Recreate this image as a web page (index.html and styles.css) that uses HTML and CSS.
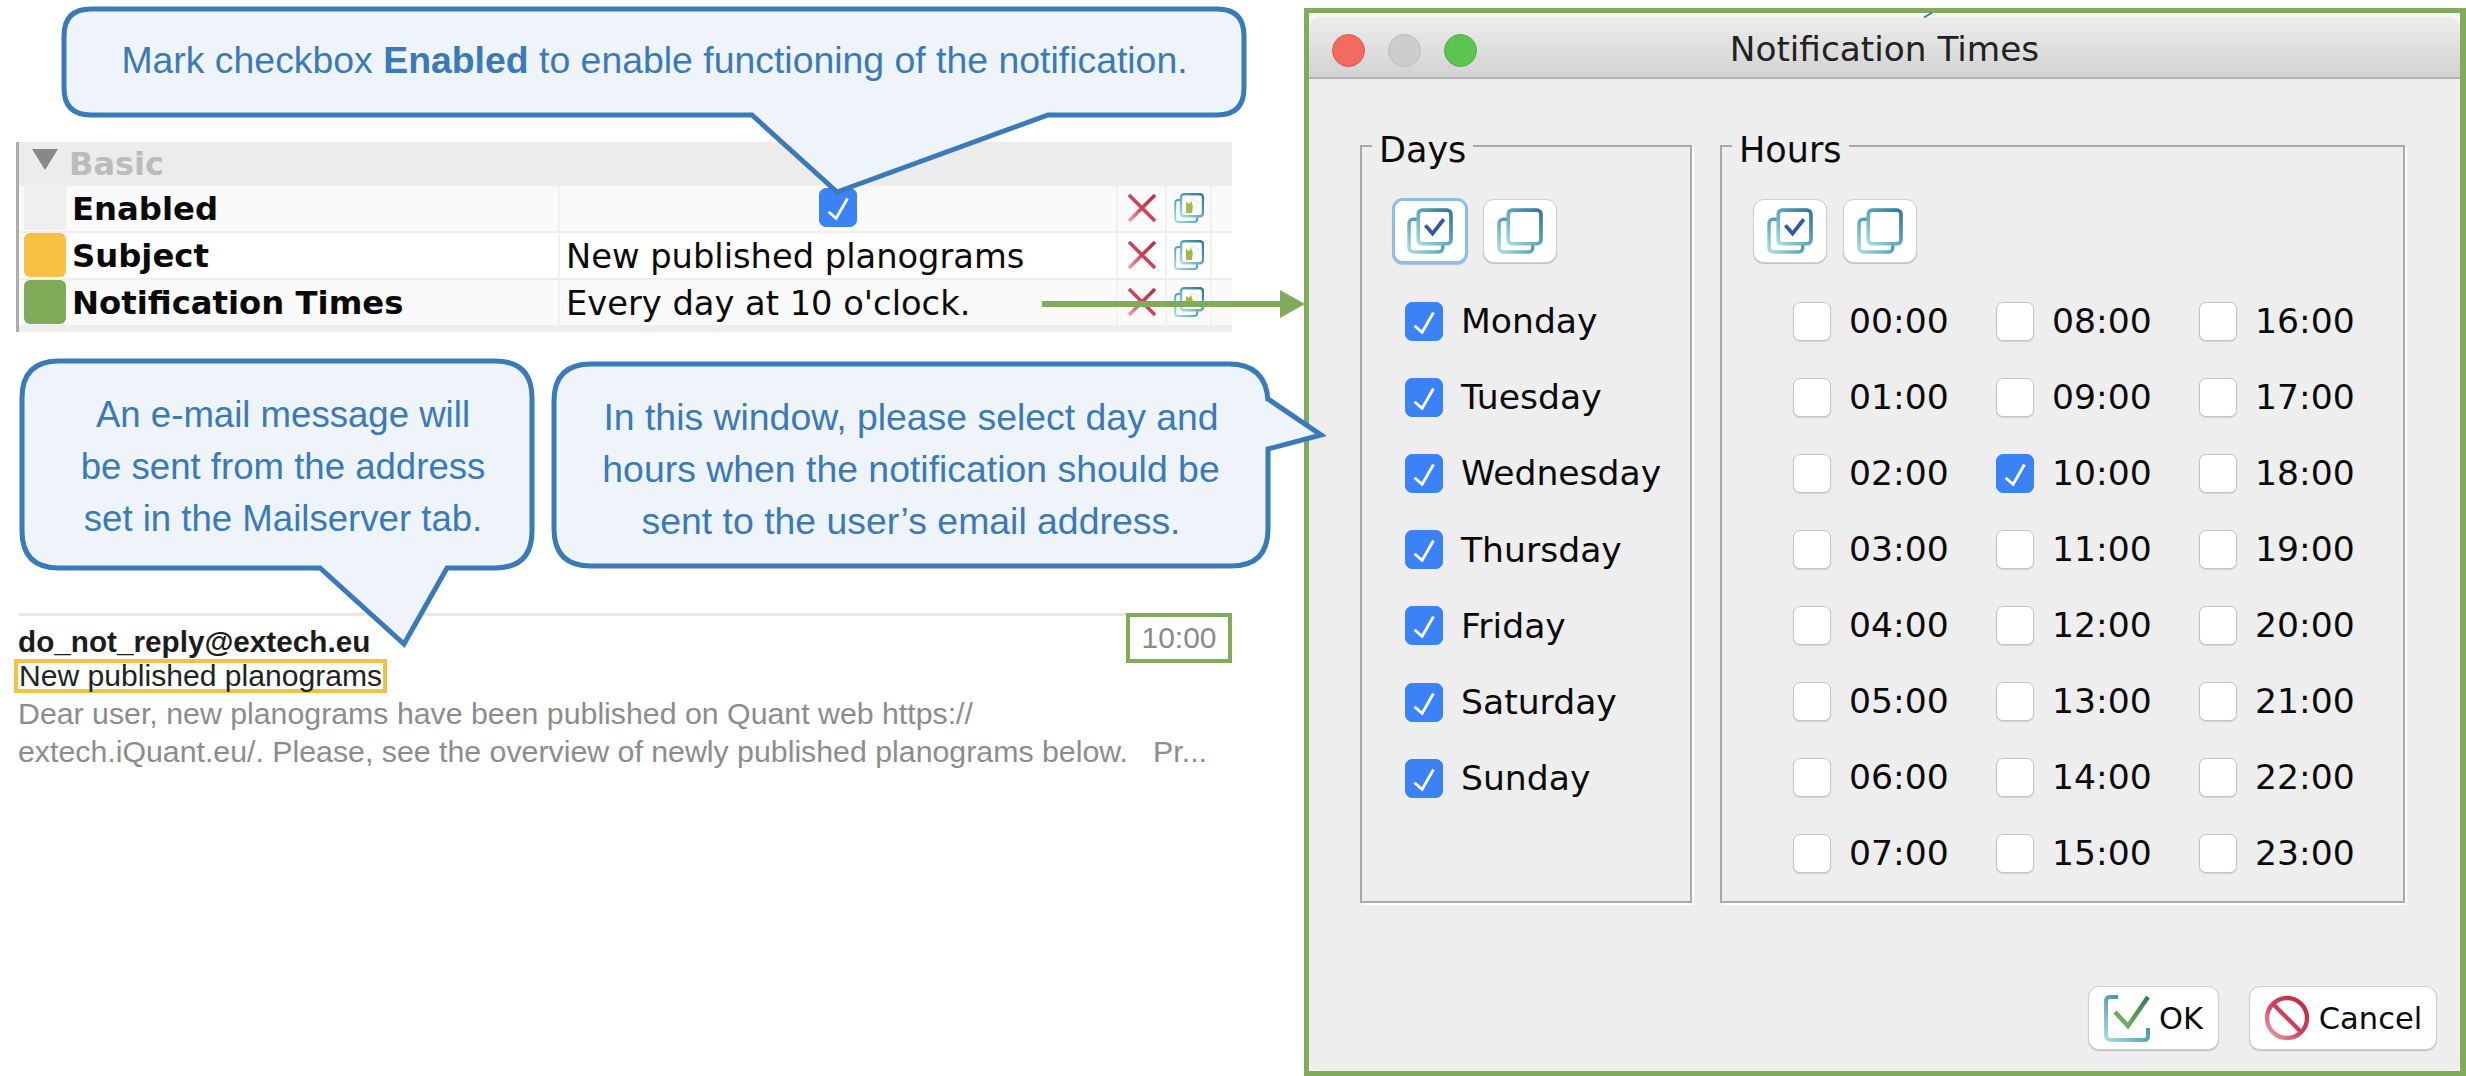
FILE: index.html
```html
<!DOCTYPE html>
<html lang="en">
<head>
<meta charset="utf-8">
<title>Notification Times</title>
<link rel="stylesheet" href="styles.css">
</head>
<body>
<svg class="defs" aria-hidden="true">
  <defs>
    <linearGradient id="teal" x1="0" y1="1" x2="1" y2="0">
      <stop offset="0" stop-color="#a8dbe3"/><stop offset="0.5" stop-color="#5aa6ba"/><stop offset="1" stop-color="#2f7695"/>
    </linearGradient>
    <linearGradient id="red" x1="0" y1="1" x2="1" y2="0">
      <stop offset="0" stop-color="#efa0b0"/><stop offset="0.5" stop-color="#cf4058"/><stop offset="1" stop-color="#bb2f3f"/>
    </linearGradient>
    <linearGradient id="green" x1="0" y1="1" x2="1" y2="0">
      <stop offset="0" stop-color="#7fb864"/><stop offset="1" stop-color="#2f7a50"/>
    </linearGradient>
    <symbol id="stack" viewBox="0 0 45 45">
      <rect x="2" y="11" width="33" height="32" rx="4" fill="none" stroke="url(#teal)" stroke-width="3.4"/>
      <rect x="11" y="2" width="32" height="33" rx="4" fill="#fff" stroke="url(#teal)" stroke-width="3.6"/>
    </symbol>
    <symbol id="stack-check" viewBox="0 0 45 45">
      <rect x="2" y="11" width="33" height="32" rx="4" fill="none" stroke="url(#teal)" stroke-width="3.4"/>
      <rect x="11" y="2" width="32" height="33" rx="4" fill="#fff" stroke="url(#teal)" stroke-width="3.6"/>
      <path d="M18 17l7 8 11-14" fill="none" stroke="#2b5aa6" stroke-width="3.6"/>
    </symbol>
    <symbol id="stack-pin" viewBox="0 0 30 30">
      <rect x="1.2" y="7" width="22" height="22" rx="3" fill="none" stroke="url(#teal)" stroke-width="2"/>
      <rect x="7" y="1.2" width="22" height="22" rx="3" fill="#fff" stroke="url(#teal)" stroke-width="2.4"/>
      <path d="M12 9l3 2 2-3 2 4-1 8h-6z" fill="#a9b83a"/>
      <path d="M17 6l8 3-6 5z" fill="#fff" stroke="#cfd8d8" stroke-width="0.6"/>
    </symbol>
    <symbol id="cross" viewBox="0 0 30 30">
      <path d="M2 2l26 26M28 2L2 28" fill="none" stroke="url(#red)" stroke-width="3.6"/>
    </symbol>
    <symbol id="tick" viewBox="0 0 38 39">
      <path d="M9 24l8 7L29 10" fill="none" stroke="#fff" stroke-width="3"/>
    </symbol>
  </defs>
</svg>

<main class="screen">
  <section class="left">
    <div class="props">
      <div class="group"><span class="tri"></span>Basic</div>
      <div class="row row-alt">
        <span class="swatch swatch-none"></span>
        <span class="name">Enabled</span>
        <span class="val val-center"><span class="cb cb-on"><svg class="tick"><use href="#tick"/></svg></span></span>
        <span class="act"><svg class="ico"><use href="#cross"/></svg></span>
        <span class="act"><svg class="ico"><use href="#stack-pin"/></svg></span>
        <span class="end"></span>
      </div>
      <div class="row">
        <span class="swatch swatch-yellow"></span>
        <span class="name">Subject</span>
        <span class="val">New published planograms</span>
        <span class="act"><svg class="ico"><use href="#cross"/></svg></span>
        <span class="act"><svg class="ico"><use href="#stack-pin"/></svg></span>
        <span class="end"></span>
      </div>
      <div class="row row-alt">
        <span class="swatch swatch-green"></span>
        <span class="name">Notification Times</span>
        <span class="val">Every day at 10 o'clock.</span>
        <span class="act"><svg class="ico"><use href="#cross"/></svg></span>
        <span class="act"><svg class="ico"><use href="#stack-pin"/></svg></span>
        <span class="end"></span>
      </div>
    </div>

    <article class="mail">
      <div class="mail-head">
        <span class="sender">do_not_reply@extech.eu</span>
        <span class="time">10:00</span>
      </div>
      <div class="subject">New published planograms</div>
      <p class="body">Dear user, new planograms have been published on Quant web https://<br>extech.iQuant.eu/. Please, see the overview of newly published planograms below. &nbsp; Pr...</p>
    </article>
  </section>

  <section class="frame">
    <div class="dialog">
      <header class="titlebar">
        <span class="lights"><i class="light l-red"></i><i class="light l-gray"></i><i class="light l-green"></i></span>
        <span class="title">Notification Times</span>
      </header>
      <div class="panels">
        <fieldset class="panel panel-days">
          <legend>Days</legend>
          <div class="tools">
            <button class="tool tool-focus"><svg class="tool-ico"><use href="#stack-check"/></svg></button>
            <button class="tool"><svg class="tool-ico"><use href="#stack"/></svg></button>
          </div>
          <ul class="days">
            <li class="opt"><span class="cb cb-on"><svg class="tick"><use href="#tick"/></svg></span>Monday</li>
            <li class="opt"><span class="cb cb-on"><svg class="tick"><use href="#tick"/></svg></span>Tuesday</li>
            <li class="opt"><span class="cb cb-on"><svg class="tick"><use href="#tick"/></svg></span>Wednesday</li>
            <li class="opt"><span class="cb cb-on"><svg class="tick"><use href="#tick"/></svg></span>Thursday</li>
            <li class="opt"><span class="cb cb-on"><svg class="tick"><use href="#tick"/></svg></span>Friday</li>
            <li class="opt"><span class="cb cb-on"><svg class="tick"><use href="#tick"/></svg></span>Saturday</li>
            <li class="opt"><span class="cb cb-on"><svg class="tick"><use href="#tick"/></svg></span>Sunday</li>
          </ul>
        </fieldset>
        <fieldset class="panel panel-hours">
          <legend>Hours</legend>
          <div class="tools tools-hours">
            <button class="tool"><svg class="tool-ico"><use href="#stack-check"/></svg></button>
            <button class="tool"><svg class="tool-ico"><use href="#stack"/></svg></button>
          </div>
          <ul class="hours">
            <li class="opt"><span class="cb"></span>00:00</li>
            <li class="opt"><span class="cb"></span>01:00</li>
            <li class="opt"><span class="cb"></span>02:00</li>
            <li class="opt"><span class="cb"></span>03:00</li>
            <li class="opt"><span class="cb"></span>04:00</li>
            <li class="opt"><span class="cb"></span>05:00</li>
            <li class="opt"><span class="cb"></span>06:00</li>
            <li class="opt"><span class="cb"></span>07:00</li>
            <li class="opt"><span class="cb"></span>08:00</li>
            <li class="opt"><span class="cb"></span>09:00</li>
            <li class="opt"><span class="cb cb-on"><svg class="tick"><use href="#tick"/></svg></span>10:00</li>
            <li class="opt"><span class="cb"></span>11:00</li>
            <li class="opt"><span class="cb"></span>12:00</li>
            <li class="opt"><span class="cb"></span>13:00</li>
            <li class="opt"><span class="cb"></span>14:00</li>
            <li class="opt"><span class="cb"></span>15:00</li>
            <li class="opt"><span class="cb"></span>16:00</li>
            <li class="opt"><span class="cb"></span>17:00</li>
            <li class="opt"><span class="cb"></span>18:00</li>
            <li class="opt"><span class="cb"></span>19:00</li>
            <li class="opt"><span class="cb"></span>20:00</li>
            <li class="opt"><span class="cb"></span>21:00</li>
            <li class="opt"><span class="cb"></span>22:00</li>
            <li class="opt"><span class="cb"></span>23:00</li>
          </ul>
        </fieldset>
      </div>
      <footer class="actions">
        <button class="btn btn-ok">
          <svg class="btn-ico" viewBox="0 0 46 48"><path d="M14 3H6Q2 3 2 7V41Q2 46 7 46H40Q44 46 44 42V34" fill="none" stroke="url(#teal)" stroke-width="4"/><path d="M11 18l13 14L44 3" fill="none" stroke="url(#green)" stroke-width="4.4"/></svg>OK
        </button>
        <button class="btn btn-cancel">
          <svg class="btn-ico" viewBox="0 0 46 48"><circle cx="23" cy="24" r="20" fill="none" stroke="url(#red)" stroke-width="4.4"/><path d="M9 10l28 28" stroke="url(#red)" stroke-width="4.4"/></svg>Cancel
        </button>
      </footer>
    </div>
  </section>

  <div class="callout callout-top">
    <svg class="shape" viewBox="0 0 1196 200"><path d="M30 3H1156Q1183 3 1183 30V82Q1183 109 1156 109H987L776 186 691 109H30Q3 109 3 82V30Q3 3 30 3Z"/></svg>
    <p class="say say-top">Mark checkbox <b>Enabled</b> to enable functioning of the notification.</p>
  </div>
  <div class="callout callout-mail">
    <svg class="shape" viewBox="0 0 520 294"><path d="M40 3H476Q513 3 513 40V173Q513 210 476 210H428L385 286 301 210H40Q3 210 3 173V40Q3 3 40 3Z"/></svg>
    <p class="say say-mail">An e-mail message will<br>be sent from the address<br>set in the Mailserver tab.</p>
  </div>
  <div class="callout callout-window">
    <svg class="shape" viewBox="0 0 775 210"><path d="M40 3H678Q715 3 717 40V38L770 74 717 88V168Q717 205 680 205H40Q3 205 3 168V40Q3 3 40 3Z"/></svg>
    <p class="say say-window">In this window, please select day and<br>hours when the notification should be<br>sent to the user’s email address.</p>
  </div>
  <svg class="arrow" viewBox="0 0 264 30"><path d="M0 12H238V1L263 15 238 29V18H0Z"/></svg>
  <svg class="stray" viewBox="0 0 10 6"><path d="M1 5.5L9 .8"/></svg>
</main>
</body>
</html>
```

FILE: styles.css
```css
* { box-sizing: border-box; }
html, body { margin: 0; padding: 0; background: #fff; }
.defs { position: absolute; width: 0; height: 0; }

.screen {
  position: relative;
  display: flex;
  width: 2466px;
  height: 1076px;
  overflow: hidden;
  font-family: "DejaVu Sans", sans-serif;
  color: #0a0a0a;
}

/* left column */
.left { width: 1304px; flex: none; padding: 142px 0 0 16px; }

.props {
  width: 1216px;
  height: 190px;
  border-left: 3px solid #adadad;
  background: #eeeeee;
  display: flex;
  flex-direction: column;
  gap: 2px;
}
.group {
  height: 42px;
  display: flex;
  align-items: center;
  padding: 2px 0 0 13px;
  gap: 11px;
  font-size: 32px;
  font-weight: 700;
  color: #bcbcbc;
  background: #ececec;
}
.tri {
  width: 0;
  height: 0;
  margin-bottom: 10px;
  border-left: 13px solid transparent;
  border-right: 13px solid transparent;
  border-top: 21px solid #888;
}
.row {
  height: 45px;
  display: grid;
  grid-template-columns: 47px 494px 558px 49px 45px 1fr;
  align-items: stretch;
  background: #fff;
}
.row-alt { background: #fafafa; }
.swatch { display: block; margin: 0 0 3px 5px; border-radius: 6px; }
.swatch-none { background: #efefef; border-radius: 0; margin-left: 5px; }
.swatch-yellow { background: #f6c142; }
.swatch-green { background: #81ab58; }
.name {
  padding-left: 6px;
  font-size: 32.3px;
  font-weight: 700;
  line-height: 47px;
  white-space: nowrap;
  border-right: 2px solid #f1f1f1;
}
.val {
  padding-left: 6px;
  font-size: 33.7px;
  line-height: 47px;
  white-space: nowrap;
  border-right: 2px solid #f1f1f1;
}
.val-center { display: flex; justify-content: center; padding: 2px 0 0; }
.act {
  display: flex;
  align-items: center;
  justify-content: center;
  border-right: 2px solid #f1f1f1;
  padding-bottom: 4px;
}
.ico { width: 30px; height: 30px; }

.cb {
  flex: none;
  display: inline-block;
  width: 38px;
  height: 39px;
  border-radius: 7px;
  background: #fff;
  border: 1px solid #c4c4c4;
  box-shadow: 0 1px 1px rgba(0,0,0,.12);
}
.cb-on { background: #3b82f6; border-color: #3b82f6; box-shadow: none; }
.tick { display: block; width: 36px; height: 37px; }

/* mail preview */
.mail {
  width: 1214px;
  margin: 281px 0 0 2px;
  border-top: 3px solid #e8e8e8;
  font-family: "Liberation Sans", sans-serif;
}
.mail-head { display: flex; justify-content: space-between; align-items: flex-start; height: 43px; }
.sender { font-size: 29.7px; font-weight: 700; color: #1c1c1c; line-height: 52px; }
.time {
  width: 106px;
  height: 50px;
  margin-top: -3px;
  border: 4px solid #81ab58;
  font-size: 30px;
  line-height: 42px;
  text-align: center;
  color: #8a8a8a;
}
.subject {
  display: inline-block;
  margin-left: -4px;
  border: 4px solid #f6c142;
  padding: 0 1px;
  font-size: 30.1px;
  line-height: 26px;
  height: 34px;
  color: #222;
  white-space: nowrap;
}
.body {
  margin: 2px 0 0;
  font-size: 30.3px;
  line-height: 38px;
  color: #8c8c8c;
  white-space: nowrap;
}

/* dialog */
.frame {
  flex: 1;
  margin-top: 8px;
  height: 1068px;
  border: 5px solid #81ab58;
  border-right-width: 6px;
  padding-top: 4px;
  background: #f6f6f6;
}
.dialog {
  height: 100%;
  background: #eeeeee;
  border-radius: 12px 12px 10px 10px;
  display: flex;
  flex-direction: column;
}
.titlebar {
  position: relative;
  flex: none;
  height: 62px;
  display: flex;
  align-items: center;
  justify-content: center;
  padding-top: 4px;
  background: linear-gradient(#ececec, #d3d3d3);
  border-bottom: 2px solid #b4b4b4;
  border-radius: 12px 12px 0 0;
}
.lights { position: absolute; left: 23px; top: 17px; display: flex; gap: 23px; }
.light { display: block; width: 33px; height: 33px; border-radius: 50%; }
.l-red { background: #f36b5e; border: 1px solid #d9574c; }
.l-gray { background: #cdcdcd; border: 1px solid #b9b9b9; }
.l-green { background: #5cc552; border: 1px solid #4cad44; }
.title { font-size: 34.3px; color: #222; }

.panels { display: flex; gap: 28px; padding: 50px 0 0 51px; align-items: flex-start; }
.panel {
  margin: 0;
  min-width: 0;
  height: 774px;
  border: 2px solid #a9a9a9;
  box-shadow: 2px 2px 0 #fff;
  padding: 0;
}
.panel legend {
  margin-left: 10px;
  padding: 0 7px;
  font-size: 35px;
  line-height: 42px;
  height: 34px;
}
.panel-days { width: 332px; }
.panel-hours { width: 685px; }
.tools { display: flex; gap: 15px; padding: 36px 0 0 30px; }
.tools-hours { padding-left: 31px; gap: 16px; }
.tool {
  width: 74px;
  height: 64px;
  padding: 0;
  display: flex;
  align-items: center;
  justify-content: center;
  background: #fff;
  border: 1px solid #cfcfcf;
  border-radius: 11px;
  box-shadow: 0 1px 1px rgba(0,0,0,.2);
}
.tool-focus { border: 3px solid #8fbdea; width: 76px; height: 66px; margin: -1px 0; }
.tool-ico { width: 46px; height: 46px; }

.days, .hours { list-style: none; margin: 0; padding: 0; }
.days { padding: 20px 0 0 43px; display: grid; grid-auto-rows: 76.2px; }
.hours {
  padding: 20px 0 0 71px;
  display: grid;
  grid-template-rows: repeat(8, 76px);
  grid-template-columns: repeat(3, 203px);
  grid-auto-flow: column;
}
.opt { display: flex; align-items: center; gap: 18px; font-size: 34.6px; white-space: nowrap; }
.hours .opt { gap: 18px; }

.actions { margin-top: auto; display: flex; justify-content: flex-end; gap: 30px; padding: 0 23px 21px 0; }
.btn {
  height: 64px;
  display: flex;
  align-items: center;
  justify-content: center;
  gap: 9px;
  padding: 0;
  background: #fff;
  border: 1px solid #cfcfcf;
  border-radius: 11px;
  box-shadow: 0 1px 1px rgba(0,0,0,.2);
  font: 30.5px "DejaVu Sans", sans-serif;
  color: #0a0a0a;
}
.btn-ok { width: 131px; }
.btn-cancel { width: 188px; }
.btn-ico { width: 46px; height: 48px; }

/* annotations layered over the page */
.callout { position: absolute; display: flex; justify-content: center; font-family: "Liberation Sans", sans-serif; }
.shape { position: absolute; left: 0; top: 0; width: 100%; height: 100%; }
.shape path { fill: #eef4fa; stroke: #3a7ab8; stroke-width: 5; stroke-linejoin: miter; }
.say { position: relative; margin: 0; color: #3a7ab8; font-size: 37.4px; line-height: 52px; text-align: center; white-space: nowrap; }
.callout-top { left: 61px; top: 6px; width: 1196px; height: 200px; }
.say-top { margin: 28px 9px 0 0; width: 1163px; }
.callout-mail { left: 19px; top: 358px; width: 520px; height: 294px; }
.say-mail { font-size: 36.6px; margin: 31px 0 0 8px; width: 512px; }
.callout-window { left: 551px; top: 361px; width: 775px; height: 210px; }
.say-window { margin-top: 30px; width: 720px; margin-right: 55px; }
.arrow { position: absolute; left: 1041px; top: 289px; width: 266px; height: 30px; }
.arrow path { fill: #81ab58; }
.stray { position: absolute; left: 1923px; top: 12px; width: 10px; height: 6px; }
.stray path { fill: none; stroke: #2f7695; stroke-width: 1.6; }
```
